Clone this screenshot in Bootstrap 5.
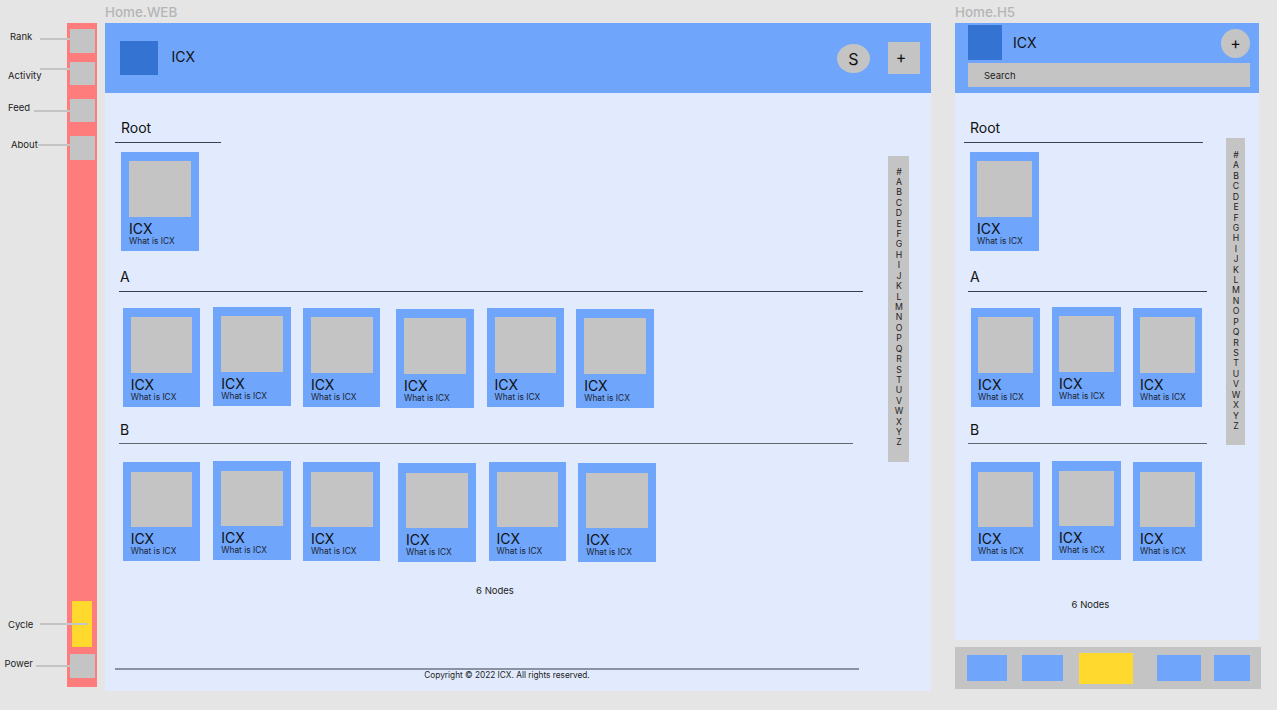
<!DOCTYPE html>
<html lang="en">
<head>
    <meta charset="UTF-8">
    <meta name="viewport" content="width=device-width, initial-scale=1.0">
    <title>Home wireframes</title>
    <link href="https://cdn.jsdelivr.net/npm/bootstrap@5.3.0/dist/css/bootstrap.min.css" rel="stylesheet">
    <style>
        html, body { height: 710px; overflow: hidden; }
        body { background: #e5e5e5; font-family: Inter, "Liberation Sans", sans-serif; color: #111; }
        .board { width: 1277px; height: 710px; }

        /* callouts left of the rail */
        .notes { width: 67px; height: 710px; }
        .note { position: absolute; font-size: 9.5px; line-height: 12px; color: #222; }
        .lead { position: absolute; height: 2px; background: #c4c4c4; z-index: 2; }
        .n-rank { left: 10px; top: 30.5px; } .l-rank { left: 40px; top: 38px; width: 30px; }
        .n-activity { left: 8px; top: 70px; } .l-activity { left: 40px; top: 68px; width: 30px; }
        .n-feed { left: 8px; top: 101.5px; } .l-feed { left: 34px; top: 110px; width: 36px; }
        .n-about { left: 11px; top: 139px; } .l-about { left: 38px; top: 144px; width: 32px; }
        .n-cycle { left: 8px; top: 618.5px; } .l-cycle { left: 40px; top: 623px; width: 48px; }
        .n-power { left: 4.5px; top: 657.5px; } .l-power { left: 36px; top: 665px; width: 34px; }

        /* rail */
        .rail { width: 30px; height: 664px; margin-top: 23px; background: #ff7c7c; padding-bottom: 9px; }
        .rail-btn { width: 25px; height: 24px; margin-left: 3px; background: #c4c4c4; }
        .rail-btn.t1 { margin-top: 6px; } .rail-btn.t2 { margin-top: 9px; height: 23px; }
        .rail-btn.t3 { margin-top: 14px; height: 23px; } .rail-btn.t4 { margin-top: 14px; }
        .rail-cycle { width: 20px; height: 46px; margin-left: 5px; margin-top: auto; background: #ffd92e; }
        .rail-btn.t5 { margin-top: 7px; }

        .frame-title { height: 23px; line-height: 25px; font-size: 13.4px; font-weight: 500; color: #b5b5b5; }
        .web-col { width: 826px; margin-left: 8px; }
        .h5-col { width: 306px; margin-left: 24px; }
        .web-frame { height: 668px; }
        .h5-frame { width: 304px; height: 617px; }
        .frame-body { background: #e1ebfd; height: 598px; }
        .h5-frame .frame-body { height: 547px; }

        .top-bar { height: 70px; background: #6fa6fb; flex-shrink: 0; }
        .brand { background: #3573d3; }
        .web-brand { width: 38px; height: 34px; margin-left: 15px; }
        .brand-name { font-size: 14px; line-height: 20px; color: #111; }
        .web-name { margin: -2px 0 0 13.5px; }
        .who { width: 33px; height: 29px; border-radius: 50%; background: #c4c4c4; font-size: 16px; margin-left: auto; padding-top: 1px; }
        .plus-sq { width: 32px; height: 32px; background: #c4c4c4; font-size: 16px; margin: 0 11px 0 18px; padding: 0 6px 3px 0; }
        .h5-brand { width: 34px; height: 35px; margin: 2px 0 0 13px; }
        .h5-name { margin: 10px 0 0 11px; }
        .plus-round { width: 29px; height: 29px; border-radius: 50%; background: #c4c4c4; font-size: 16px; margin: 6px 9px 0 auto; padding-bottom: 2px; }
        .search-box { width: 282px; height: 24px; margin: 3px 0 0 13px; padding: 2px 0 0 16px; background: #c4c4c4; font-size: 9.5px; color: #222; }

        .main-col { padding-top: 24px; }
        .web-main { width: 748px; margin-left: 10px; }
        .h5-main { width: 243px; margin-left: 9px; }
        .letter-head { font-size: 14px; line-height: 20px; padding-top: 1px; padding-bottom: 4px; border-bottom: 1px solid #3c3f4c; color: #111; }
        .h-b { padding-bottom: 3px; border-bottom-color: #63666f; }
        .letter-next { margin-top: 15px; }
        .letter-b { margin-top: 11px; }
        .h5-main .letter-b { margin-top: 12px; }
        .web-main .h-root { width: 106px; padding-left: 6px; }
        .web-main .h-a { width: 744px; margin-left: 4px; padding-left: 1px; }
        .web-main .h-b { width: 734px; margin-left: 4px; padding-left: 1px; }
        .h5-main .h-root { width: 239px; padding-left: 6px; }
        .h5-main .h-a, .h5-main .h-b { width: 239px; margin-left: 4px; padding-left: 2px; }

        .node-row { margin-top: 15.3px; }
        .row-b { margin-top: 17.6px; }
        .row-root { margin-top: 9px; }
        .web-main .node-row { margin-left: 7.7px; }
        .web-main .row-root { margin-left: 6px; }
        .h5-main .node-row { margin-left: 7px; }
        .h5-main .row-root { margin-left: 6px; }

        .node-tile { width: 77.6px; height: 98.8px; background: #6fa6fb; padding: 9.2px 0 0 8px; flex-shrink: 0; }
        .h5-main .node-tile { width: 69px; padding-left: 7px; }
        .node-pic { width: 61.8px; height: 55.6px; background: #c4c4c4; }
        .h5-main .node-pic { width: 55px; }
        .node-name { font-size: 14px; line-height: 16px; margin-top: 4px; color: #111; }
        .node-desc { font-size: 8.35px; line-height: 10px; margin-top: -1px; color: #1b2230; white-space: nowrap; }
        .dy1 { margin-top: 1px; } .dy2 { margin-top: 2px; }
        .gl12 { margin-left: 12px; } .gl13 { margin-left: 13px; }
        .gl15 { margin-left: 15.5px; } .gl17 { margin-left: 17.5px; }

        .node-count { font-size: 9.5px; line-height: 14px; color: #222; text-align: center; }
        .web-main .node-count { margin-top: 22px; padding-left: 12px; }
        .h5-main .node-count { margin-top: 36.4px; padding-left: 10px; }
        .page-foot { width: 744px; border-top: 2px solid #8a92a3; font-size: 8.27px; line-height: 10px; color: #222; text-align: center; padding-left: 40px; margin-top: auto; margin-bottom: 11px; }

        .alpha-bar { background: #c4c4c4; font-size: 8.7px; line-height: 10.42px; text-align: center; color: #222; flex-shrink: 0; }
        .web-alpha { width: 21px; height: 306px; margin: 63px 0 0 25px; padding: 10.5px 0 0 1px; }
        .h5-alpha { width: 19px; height: 307px; margin: 45px 0 0 19px; padding: 12px 0 0 1px; }

        .tab-strip { width: 306px; height: 42px; margin-top: 7px; background: #c4c4c4; }
        .tab-item { height: 26px; background: #6fa6fb; }
        .tab-1 { width: 40px; margin-left: 12px; } .tab-2 { width: 41px; margin-left: 15px; }
        .tab-cycle { width: 54px; height: 31px; margin-left: 16px; background: #ffd92e; }
        .tab-4 { width: 44px; margin-left: 24px; } .tab-5 { width: 36px; margin-left: 13px; }
    </style>
</head>
<body>
    <div class="board d-flex align-items-start position-relative">
        <div class="notes flex-shrink-0">
            <span class="note n-rank">Rank</span><span class="lead l-rank"></span>
            <span class="note n-activity">Activity</span><span class="lead l-activity"></span>
            <span class="note n-feed">Feed</span><span class="lead l-feed"></span>
            <span class="note n-about">About</span><span class="lead l-about"></span>
            <span class="note n-cycle">Cycle</span><span class="lead l-cycle"></span>
            <span class="note n-power">Power</span><span class="lead l-power"></span>
        </div>

        <div class="rail d-flex flex-column flex-shrink-0">
            <div class="rail-btn t1"></div>
            <div class="rail-btn t2"></div>
            <div class="rail-btn t3"></div>
            <div class="rail-btn t4"></div>
            <div class="rail-cycle"></div>
            <div class="rail-btn t5"></div>
        </div>

        <!-- Home.WEB -->
        <div class="web-col flex-shrink-0">
            <div class="frame-title">Home.WEB</div>
            <div class="web-frame d-flex flex-column">
                <div class="top-bar d-flex align-items-center">
                    <div class="brand web-brand"></div>
                    <div class="brand-name web-name">ICX</div>
                    <div class="who d-flex align-items-center justify-content-center">S</div>
                    <div class="plus-sq d-flex align-items-center justify-content-center">+</div>
                </div>
                <div class="frame-body d-flex">
                    <div class="main-col web-main d-flex flex-column flex-shrink-0">
                        <div class="letter-head h-root">Root</div>
                        <div class="node-row row-root d-flex align-items-start">
                            <div class="node-tile"><div class="node-pic"></div><div class="node-name">ICX</div><div class="node-desc">What is ICX</div></div>
                        </div>
                        <div class="letter-head h-a letter-next">A</div>
                        <div class="node-row d-flex align-items-start">
                            <div class="node-tile dy1"><div class="node-pic"></div><div class="node-name">ICX</div><div class="node-desc">What is ICX</div></div>
                            <div class="node-tile gl13"><div class="node-pic"></div><div class="node-name">ICX</div><div class="node-desc">What is ICX</div></div>
                            <div class="node-tile dy1 gl12"><div class="node-pic"></div><div class="node-name">ICX</div><div class="node-desc">What is ICX</div></div>
                            <div class="node-tile dy2 gl15"><div class="node-pic"></div><div class="node-name">ICX</div><div class="node-desc">What is ICX</div></div>
                            <div class="node-tile dy1 gl13"><div class="node-pic"></div><div class="node-name">ICX</div><div class="node-desc">What is ICX</div></div>
                            <div class="node-tile dy2 gl12"><div class="node-pic"></div><div class="node-name">ICX</div><div class="node-desc">What is ICX</div></div>
                        </div>
                        <div class="letter-head h-b letter-b">B</div>
                        <div class="node-row row-b d-flex align-items-start">
                            <div class="node-tile dy1"><div class="node-pic"></div><div class="node-name">ICX</div><div class="node-desc">What is ICX</div></div>
                            <div class="node-tile gl13"><div class="node-pic"></div><div class="node-name">ICX</div><div class="node-desc">What is ICX</div></div>
                            <div class="node-tile dy1 gl12"><div class="node-pic"></div><div class="node-name">ICX</div><div class="node-desc">What is ICX</div></div>
                            <div class="node-tile dy2 gl17"><div class="node-pic"></div><div class="node-name">ICX</div><div class="node-desc">What is ICX</div></div>
                            <div class="node-tile dy1 gl13"><div class="node-pic"></div><div class="node-name">ICX</div><div class="node-desc">What is ICX</div></div>
                            <div class="node-tile dy2 gl12"><div class="node-pic"></div><div class="node-name">ICX</div><div class="node-desc">What is ICX</div></div>
                        </div>
                        <div class="node-count">6 Nodes</div>
                        <div class="page-foot">Copyright © 2022 ICX. All rights reserved.</div>
                    </div>
                    <div class="alpha-bar web-alpha">#<br>A<br>B<br>C<br>D<br>E<br>F<br>G<br>H<br>I<br>J<br>K<br>L<br>M<br>N<br>O<br>P<br>Q<br>R<br>S<br>T<br>U<br>V<br>W<br>X<br>Y<br>Z</div>
                </div>
            </div>
        </div>

        <!-- Home.H5 -->
        <div class="h5-col flex-shrink-0">
            <div class="frame-title">Home.H5</div>
            <div class="h5-frame d-flex flex-column">
                <div class="top-bar">
                    <div class="d-flex align-items-start">
                        <div class="brand h5-brand"></div>
                        <div class="brand-name h5-name">ICX</div>
                        <div class="plus-round d-flex align-items-center justify-content-center">+</div>
                    </div>
                    <div class="search-box d-flex align-items-center">Search</div>
                </div>
                <div class="frame-body d-flex">
                    <div class="main-col h5-main d-flex flex-column flex-shrink-0">
                        <div class="letter-head h-root">Root</div>
                        <div class="node-row row-root d-flex align-items-start">
                            <div class="node-tile"><div class="node-pic"></div><div class="node-name">ICX</div><div class="node-desc">What is ICX</div></div>
                        </div>
                        <div class="letter-head h-a letter-next">A</div>
                        <div class="node-row d-flex align-items-start">
                            <div class="node-tile dy1"><div class="node-pic"></div><div class="node-name">ICX</div><div class="node-desc">What is ICX</div></div>
                            <div class="node-tile gl12"><div class="node-pic"></div><div class="node-name">ICX</div><div class="node-desc">What is ICX</div></div>
                            <div class="node-tile dy1 gl12"><div class="node-pic"></div><div class="node-name">ICX</div><div class="node-desc">What is ICX</div></div>
                        </div>
                        <div class="letter-head h-b letter-b">B</div>
                        <div class="node-row row-b d-flex align-items-start">
                            <div class="node-tile dy1"><div class="node-pic"></div><div class="node-name">ICX</div><div class="node-desc">What is ICX</div></div>
                            <div class="node-tile gl12"><div class="node-pic"></div><div class="node-name">ICX</div><div class="node-desc">What is ICX</div></div>
                            <div class="node-tile dy1 gl12"><div class="node-pic"></div><div class="node-name">ICX</div><div class="node-desc">What is ICX</div></div>
                        </div>
                        <div class="node-count">6 Nodes</div>
                    </div>
                    <div class="alpha-bar h5-alpha">#<br>A<br>B<br>C<br>D<br>E<br>F<br>G<br>H<br>I<br>J<br>K<br>L<br>M<br>N<br>O<br>P<br>Q<br>R<br>S<br>T<br>U<br>V<br>W<br>X<br>Y<br>Z</div>
                </div>
            </div>
            <div class="tab-strip d-flex align-items-center">
                <div class="tab-item tab-1"></div>
                <div class="tab-item tab-2"></div>
                <div class="tab-cycle"></div>
                <div class="tab-item tab-4"></div>
                <div class="tab-item tab-5"></div>
            </div>
        </div>
    </div>
    <script src="https://cdn.jsdelivr.net/npm/bootstrap@5.3.0/dist/js/bootstrap.bundle.min.js"></script>
</body>
</html>
